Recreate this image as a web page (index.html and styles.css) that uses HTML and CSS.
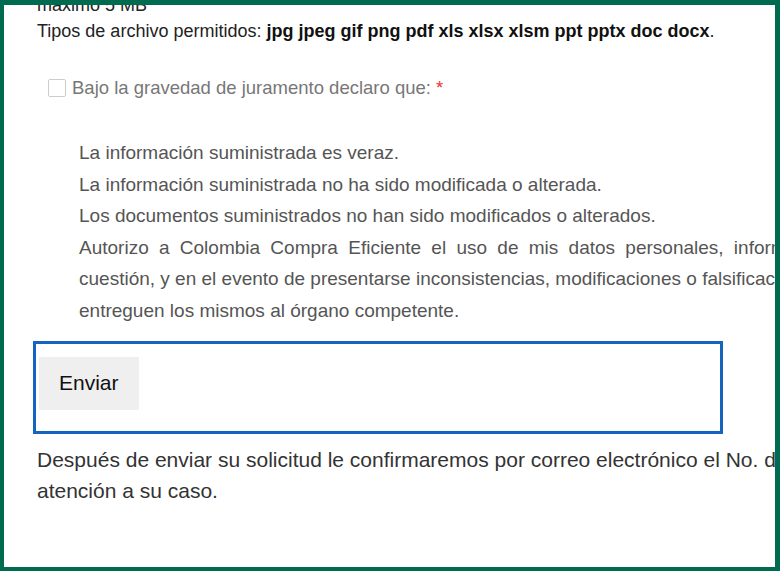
FILE: index.html
```html
<!DOCTYPE html>
<html lang="es">
<head>
  <meta charset="UTF-8">
  <title>Solicitud - Enviar</title>
  <link rel="stylesheet" href="styles.css">
</head>
<body>

  <div class="frame">
    <div class="page">

      <!-- Archivos -->
      <p class="hint hint-size">máximo 5 MB</p>
      <p class="hint">Tipos de archivo permitidos: <b>jpg jpeg gif png pdf xls xlsx xlsm ppt pptx doc docx</b>.</p>

      <!-- Declaracion -->
      <div class="oath">
        <label class="check">
          <input type="checkbox" class="check-box">
          <span>Bajo la gravedad de juramento declaro que: <span class="req">*</span></span>
        </label>
        <ul class="oath-list">
          <li>La información suministrada es veraz.</li>
          <li>La información suministrada no ha sido modificada o alterada.</li>
          <li>Los documentos suministrados no han sido modificados o alterados.</li>
          <li><span class="spread">Autorizo a Colombia Compra Eficiente el uso de mis datos personales, información y documentos para verificar la información en</span><br>cuestión, y en el evento de presentarse inconsistencias, modificaciones o falsificaciones, se<br>entreguen los mismos al órgano competente.</li>
        </ul>
      </div>

      <div class="actions">
        <button type="submit" class="btn-send">Enviar</button>
      </div>

      <p class="after">Después de enviar su solicitud le confirmaremos por correo electrónico el No. de radicado con el cual se dará<br>atención a su caso.</p>

    </div>
  </div>

</body>
</html>
```

FILE: styles.css
```css
html, body {
  margin: 0;
  padding: 0;
  background: #fff;
}
.frame {
  width: 780px;
  height: 571px;
  box-sizing: border-box;
  border: 5px solid #006b4f;
  border-left-width: 4px;
  border-bottom-width: 4px;
  overflow: hidden;
}
.page {
  width: 1100px;
  padding-left: 33px;
  margin-top: -13px;
  font-family: "Liberation Sans", Arial, sans-serif;
  white-space: nowrap;
}
.hint {
  margin: 0;
  font-size: 18px;
  line-height: 26px;
  color: #222;
}
.hint b {
  color: #111;
}
.oath {
  margin-top: 33px;
}
.check {
  display: flex;
  align-items: center;
  gap: 6px;
  padding-left: 11px;
  font-size: 18.5px;
  color: #777;
}
.check-box {
  appearance: none;
  width: 18px;
  height: 18px;
  margin: 0;
  border: 1px solid #ccc;
  border-radius: 2px;
  background: #fff;
}
.req {
  color: #e53935;
}
.oath-list {
  list-style: none;
  margin: 38px 0 0;
  padding-left: 42px;
  font-size: 19px;
  line-height: 31.6px;
  color: #555;
}
.spread {
  word-spacing: 5px;
}
.actions {
  width: 681px;
  margin-top: 14px;
  padding: 13px 0 21px 3px;
  border: 3px solid #1565c0;
  margin-left: -4px;
}
.btn-send {
  padding: 0 20px;
  height: 53px;
  width: 100px;
  border: none;
  border-radius: 0;
  background: #efefef;
  font-family: "Liberation Sans", Arial, sans-serif;
  font-size: 21px;
  color: #111;
  text-align: left;
}
.after {
  margin: 10px 0 0;
  font-size: 21px;
  line-height: 31px;
  color: #333;
}
```
